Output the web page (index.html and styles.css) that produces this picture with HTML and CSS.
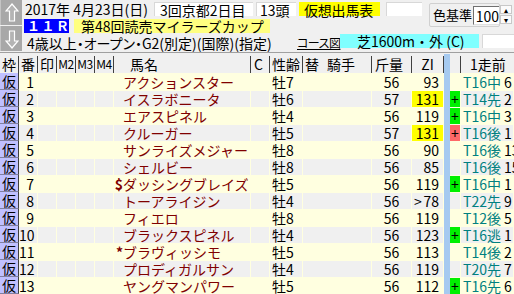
FILE: index.html
```html
<!DOCTYPE html>
<html lang="ja">
<head>
<meta charset="utf-8">
<title>仮想出馬表</title>
<link rel="stylesheet" href="styles.css">
</head>
<body>
<div class="top">
  <div class="arrows">
    <div class="arrow">
      <svg width="14" height="20" viewBox="0 0 14 20"><path d="M7 1 L13 8 L9.5 8 L9.5 18 L4.5 18 L4.5 8 L1 8 Z" fill="#b4b4b4" stroke="#fff" stroke-width="1.2"/></svg>
    </div>
    <div class="arrow">
      <svg width="14" height="20" viewBox="0 0 14 20"><path d="M7 19 L13 12 L9.5 12 L9.5 2 L4.5 2 L4.5 12 L1 12 Z" fill="#b4b4b4" stroke="#fff" stroke-width="1.2"/></svg>
    </div>
  </div>
  <div class="main">
    <div class="upper">
      <div class="upper-left">
        <div class="r1">
          <div class="date">2017年 4月23日(日)</div>
          <div class="box b-place">3回京都2日目</div>
          <div class="box b-heads">13頭</div>
          <div class="box b-kaso">仮想出馬表</div>
          <div class="box b-blank"></div>
        </div>
        <div class="r2">
          <div class="race-no">１１Ｒ</div>
          <div class="race-name">第48回読売マイラーズカップ</div>
        </div>
      </div>
      <div class="color-ctl">
        <span class="color-label">色基準</span>
        <span class="color-input">100</span>
      </div>
      <div class="spinner">
        <div class="spin">▴</div>
        <div class="spin">▾</div>
      </div>
    </div>
    <div class="r3">
      <div class="cond">4歳以上・オープン・G2(別定)(国際)(指定)</div>
      <div class="course-link">コース図</div>
      <div class="course">芝1600m・外 (C)</div>
      <div class="box b-course-blank"></div>
    </div>
  </div>
</div>

<div class="grid">
  <div class="hdr">
    <div class="c">枠</div>
    <div class="c">番</div>
    <div class="c">印</div>
    <div class="c m">M2</div>
    <div class="c m">M3</div>
    <div class="c m">M4</div>
    <div class="h-name">馬名</div>
    <div class="h-c">C</div>
    <div class="h-sex">性齢</div>
    <div class="h-jockey"><span>替</span><span class="jk">騎手</span></div>
    <div class="h-kin">斤量</div>
    <div class="c">ZI</div>
    <div class="bar"></div>
    <div></div>
    <div class="h-prev">1走前</div>
  </div>

  <div class="row odd">
    <div class="waku">仮</div><div class="ban">1</div><div></div><div></div><div></div><div></div>
    <div class="name"><span class="pre"></span>アクションスター</div><div></div>
    <div class="sex">牡7</div><div></div><div class="kin">56</div><div class="zi">93</div>
    <div class="bar"></div><div class="plus"></div><div class="prev"><span class="tc">T16中</span> 6</div>
  </div>
  <div class="row even">
    <div class="waku">仮</div><div class="ban">2</div><div></div><div></div><div></div><div></div>
    <div class="name"><span class="pre"></span>イスラボニータ</div><div></div>
    <div class="sex">牡6</div><div></div><div class="kin">57</div><div class="zi hi">131</div>
    <div class="bar"></div><div class="plus g">+</div><div class="prev"><span class="tc">T14先</span> 2</div>
  </div>
  <div class="row odd">
    <div class="waku">仮</div><div class="ban">3</div><div></div><div></div><div></div><div></div>
    <div class="name"><span class="pre"></span>エアスピネル</div><div></div>
    <div class="sex">牡4</div><div></div><div class="kin">56</div><div class="zi">119</div>
    <div class="bar"></div><div class="plus g">+</div><div class="prev"><span class="tc">T16中</span> 3</div>
  </div>
  <div class="row even">
    <div class="waku">仮</div><div class="ban">4</div><div></div><div></div><div></div><div></div>
    <div class="name"><span class="pre"></span>クルーガー</div><div></div>
    <div class="sex">牡5</div><div></div><div class="kin">57</div><div class="zi hi">131</div>
    <div class="bar"></div><div class="plus r">+</div><div class="prev"><span class="tc">T16後</span> 1</div>
  </div>
  <div class="row odd">
    <div class="waku">仮</div><div class="ban">5</div><div></div><div></div><div></div><div></div>
    <div class="name"><span class="pre"></span>サンライズメジャー</div><div></div>
    <div class="sex">牡8</div><div></div><div class="kin">56</div><div class="zi">90</div>
    <div class="bar"></div><div class="plus"></div><div class="prev"><span class="tc">T16後</span> 13</div>
  </div>
  <div class="row even">
    <div class="waku">仮</div><div class="ban">6</div><div></div><div></div><div></div><div></div>
    <div class="name"><span class="pre"></span>シェルビー</div><div></div>
    <div class="sex">牡8</div><div></div><div class="kin">56</div><div class="zi">85</div>
    <div class="bar"></div><div class="plus"></div><div class="prev"><span class="tc">T16後</span> 15</div>
  </div>
  <div class="row odd">
    <div class="waku">仮</div><div class="ban">7</div><div></div><div></div><div></div><div></div>
    <div class="name"><span class="pre">$</span>ダッシングブレイズ</div><div></div>
    <div class="sex">牡5</div><div></div><div class="kin">56</div><div class="zi">119</div>
    <div class="bar"></div><div class="plus g">+</div><div class="prev"><span class="tc">T16中</span> 1</div>
  </div>
  <div class="row even">
    <div class="waku">仮</div><div class="ban">8</div><div></div><div></div><div></div><div></div>
    <div class="name"><span class="pre"></span>トーアライジン</div><div></div>
    <div class="sex">牡4</div><div></div><div class="kin">56</div><div class="zi"><span class="gt">&gt;</span>78</div>
    <div class="bar"></div><div class="plus"></div><div class="prev"><span class="tc">T22先</span> 9</div>
  </div>
  <div class="row odd">
    <div class="waku">仮</div><div class="ban">9</div><div></div><div></div><div></div><div></div>
    <div class="name"><span class="pre"></span>フィエロ</div><div></div>
    <div class="sex">牡8</div><div></div><div class="kin">56</div><div class="zi">119</div>
    <div class="bar"></div><div class="plus"></div><div class="prev"><span class="tc">T12後</span> 5</div>
  </div>
  <div class="row even">
    <div class="waku">仮</div><div class="ban">10</div><div></div><div></div><div></div><div></div>
    <div class="name"><span class="pre"></span>ブラックスピネル</div><div></div>
    <div class="sex">牡4</div><div></div><div class="kin">56</div><div class="zi">123</div>
    <div class="bar"></div><div class="plus g">+</div><div class="prev"><span class="tc">T16逃</span> 1</div>
  </div>
  <div class="row odd">
    <div class="waku">仮</div><div class="ban">11</div><div></div><div></div><div></div><div></div>
    <div class="name"><span class="pre">*</span>ブラヴィッシモ</div><div></div>
    <div class="sex">牡5</div><div></div><div class="kin">56</div><div class="zi">113</div>
    <div class="bar"></div><div class="plus"></div><div class="prev"><span class="tc">T14後</span> 2</div>
  </div>
  <div class="row even">
    <div class="waku">仮</div><div class="ban">12</div><div></div><div></div><div></div><div></div>
    <div class="name"><span class="pre"></span>プロディガルサン</div><div></div>
    <div class="sex">牡4</div><div></div><div class="kin">56</div><div class="zi">119</div>
    <div class="bar"></div><div class="plus"></div><div class="prev"><span class="tc">T20先</span> 7</div>
  </div>
  <div class="row odd">
    <div class="waku">仮</div><div class="ban">13</div><div></div><div></div><div></div><div></div>
    <div class="name"><span class="pre"></span>ヤングマンパワー</div><div></div>
    <div class="sex">牡5</div><div></div><div class="kin">56</div><div class="zi">112</div>
    <div class="bar"></div><div class="plus g">+</div><div class="prev"><span class="tc">T16先</span> 6</div>
  </div>
</div>
</body>
</html>
```

FILE: styles.css
```css
html, body {
  margin: 0;
  padding: 0;
}
body {
  width: 514px;
  height: 294px;
  overflow: hidden;
  background: #f0f0f0;
  color: #000;
  font-family: "Noto Sans CJK JP", "Noto Sans", sans-serif;
  font-size: 14px;
  line-height: 16px;
}

/* ---------- top panel ---------- */
.top {
  display: flex;
  height: 52px;
}
.arrows {
  width: 22px;
  display: flex;
  flex-direction: column;
  gap: 1px;
}
.arrow {
  height: 25px;
  background: #a8a8a8;
  border-left: 1px solid #c4c4c4;
  box-sizing: border-box;
  display: flex;
  align-items: center;
  justify-content: center;
}
.main {
  flex: 1;
  display: flex;
  flex-direction: column;
}
.upper {
  display: flex;
  height: 34px;
}
.upper-left {
  width: 407px;
}
.r1 {
  display: flex;
  height: 18px;
  padding-top: 2px;
  box-sizing: border-box;
}
.date {
  width: 132px;
  padding-left: 3px;
  box-sizing: border-box;
  line-height: 14px;
  white-space: nowrap;
}
.box {
  height: 14px;
  line-height: 14px;
  background: #fff;
  box-sizing: border-box;
  border-top: 1px solid #d8d8d8;
  border-left: 1px solid #d8d8d8;
  white-space: nowrap;
}
.b-place {
  width: 99px;
  padding-left: 5px;
}
.b-heads {
  width: 40px;
  margin-left: 3px;
  padding-left: 3px;
}
.b-kaso {
  width: 81px;
  margin-left: 3px;
  padding-left: 4px;
  background: #ffff00;
  border-color: #ffff00;
  letter-spacing: -0.2px;
}
.b-blank {
  width: 36px;
  margin-left: 6px;
}
.r2 {
  display: flex;
  height: 16px;
  padding-top: 1px;
  box-sizing: border-box;
}
.race-no {
  margin-left: 2px;
  width: 45px;
  height: 14px;
  line-height: 14px;
  background: #0000ff;
  color: #fff;
  font-weight: bold;
  font-size: 13px;
  padding-left: 3px;
  letter-spacing: 1.5px;
  box-sizing: border-box;
  white-space: nowrap;
}
.race-name {
  margin-left: 5px;
  width: 196px;
  height: 14px;
  line-height: 14px;
  background: #ffff80;
  padding-left: 7px;
  box-sizing: border-box;
  white-space: nowrap;
}
.color-ctl {
  margin-top: 3px;
  width: 71px;
  height: 24px;
  box-sizing: border-box;
  border: 1px solid #d0d0d0;
  border-radius: 2px;
  background: #f0f0f0;
  display: flex;
  align-items: center;
  padding-left: 3px;
}
.color-label {
  width: 41px;
  font-size: 13px;
  white-space: nowrap;
}
.color-input {
  width: 27px;
  height: 19px;
  line-height: 18px;
  background: #fff;
  box-sizing: border-box;
  border-top: 1px solid #707070;
  border-left: 1px solid #707070;
  border-bottom: 1px solid #e0e0e0;
  padding-left: 2px;
  font-size: 14px;
}
.spinner {
  margin-top: 5px;
  width: 12px;
  height: 19px;
  display: flex;
  flex-direction: column;
  gap: 1px;
}
.spin {
  flex: 1;
  background: #fbfbfb;
  border: 1px solid #c8c8c8;
  box-sizing: border-box;
  font-size: 8px;
  line-height: 7px;
  text-align: center;
  color: #000;
}
.r3 {
  display: flex;
  height: 18px;
  align-items: flex-start;
}
.cond {
  width: 275px;
  padding-left: 5px;
  box-sizing: border-box;
  line-height: 16px;
  margin-top: 1px;
  font-feature-settings: "palt";
  white-space: nowrap;
}
.course-link {
  width: 43px;
  margin-top: 1px;
  line-height: 15px;
  text-decoration: underline;
  font-size: 12px;
  letter-spacing: -0.5px;
  font-feature-settings: "palt";
  white-space: nowrap;
}
.course {
  width: 139px;
  height: 14px;
  line-height: 14px;
  background: #80ffff;
  padding-left: 17px;
  box-sizing: border-box;
  white-space: nowrap;
}
.b-course-blank {
  flex: 1;
  margin-left: 3px;
}

/* ---------- grid ---------- */
.grid {
  border-top: 1px solid #a0a0a0;
}
.hdr,
.row {
  display: grid;
  grid-template-columns: 19px 19px 19px 19px 19px 19px 137px 19px 33px 69px 40px 32px 6px 11px 1fr;
}
.hdr {
  height: 20px;
  padding-top: 3px;
  box-sizing: border-box;
}
.hdr > div {
  border-right: 1px solid #404040;
  height: 17px;
  line-height: 16px;
  box-sizing: border-box;
  white-space: nowrap;
}
.hdr > .bar {
  border-right: none;
  margin-top: -2px;
  height: 19px;
}
.hdr > .h-prev {
  border-right: none;
}
.c {
  text-align: center;
}
.m {
  font-size: 12px;
  letter-spacing: -0.5px;
}
.h-name {
  padding-left: 16px;
}
.h-c {
  padding-left: 3px;
}
.h-sex {
  padding-left: 2px;
}
.h-jockey {
  padding-left: 2px;
}
.jk {
  margin-left: 8px;
}
.h-kin {
  padding-left: 3px;
}
.h-prev {
  padding-left: 9px;
}

.row {
  height: 17px;
}
.row > div {
  border-top: 1px solid #ffffe0;
  border-right: 1px solid #ffffe0;
  box-sizing: border-box;
  line-height: 16px;
  white-space: nowrap;
}
.odd > div {
  background: #ffffe0;
}
.even > div {
  background: #f0f0f0;
}
.row > .waku {
  background: #c0c0ff;
  border-top: none;
  border-right: 1px solid #404040;
  border-bottom: 1px solid #8080a0;
  text-align: center;
  line-height: 16px;
}
.row > .bar,
.bar {
  background: #a6caf0;
  border: none;
}
.ban {
  text-align: right;
  padding-right: 3px;
}
.name {
  color: #800000;
}
.pre {
  display: inline-block;
  width: 9px;
  text-align: right;
  font-weight: bold;
}
.sex {
  padding-left: 2px;
}
.kin {
  text-align: center;
}
.zi {
  text-align: right;
  padding-right: 4px;
}
.row > .hi {
  background: #ffff00;
}
.gt {
  float: left;
  padding-left: 2px;
}
.plus {
  text-align: center;
  line-height: 15px;
}
.row > .g {
  background: #00f000;
}
.row > .r {
  background: #ff6868;
}
.prev {
  padding-left: 2px;
  border-right: none;
}
.tc {
  color: #008080;
}
```
